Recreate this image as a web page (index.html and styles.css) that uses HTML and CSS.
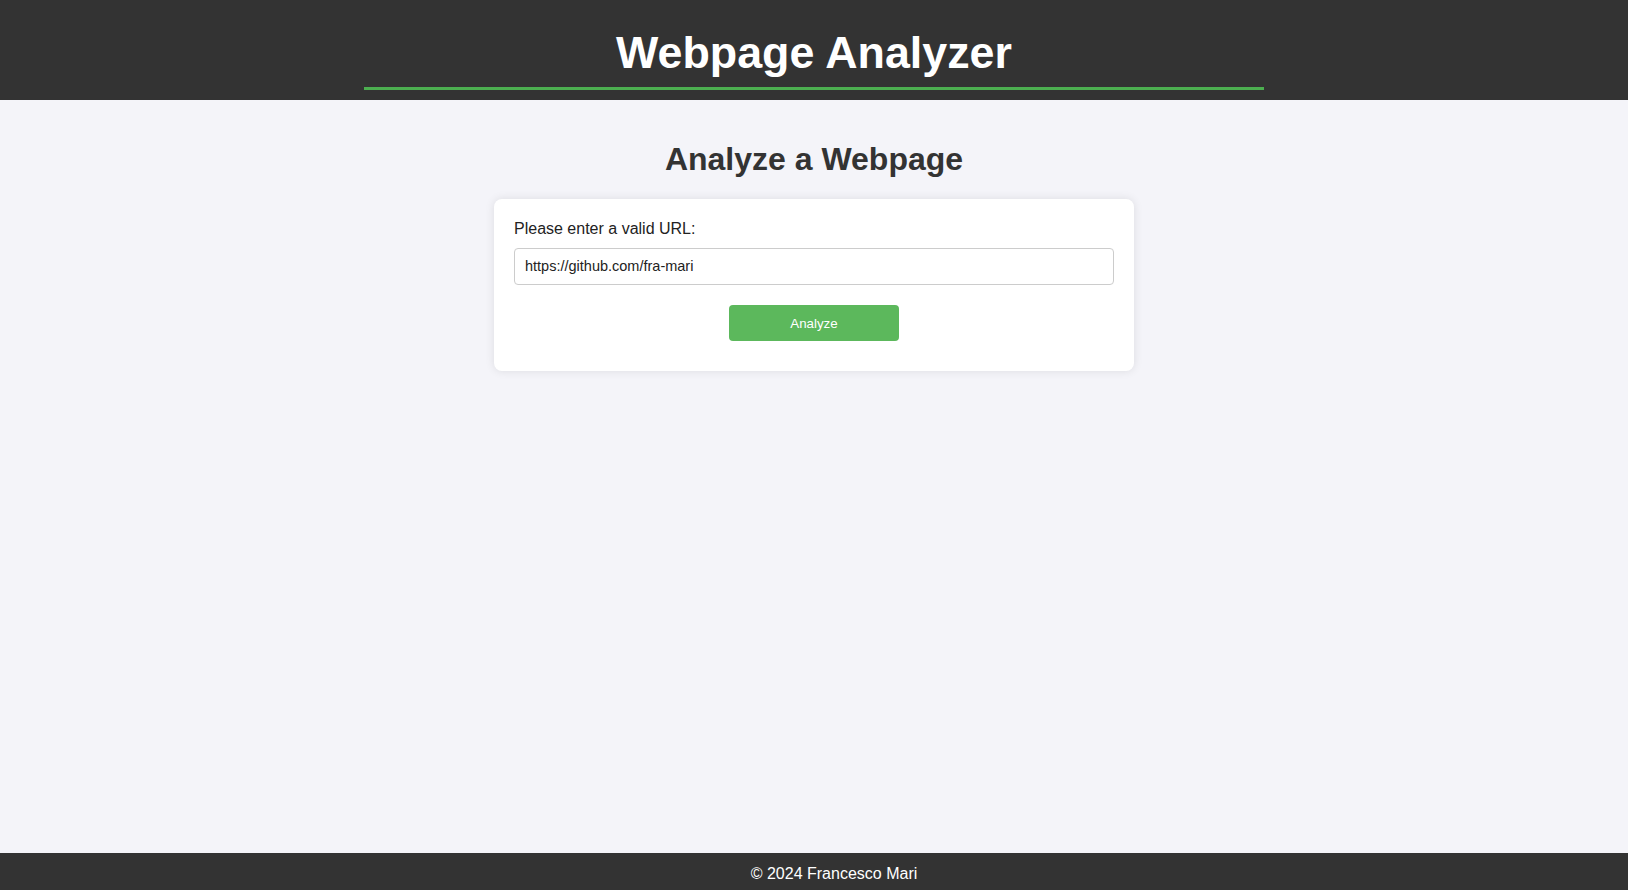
FILE: index.html
```html
<!DOCTYPE html>
<html lang="en">
<head>
<meta charset="utf-8">
<title>Webpage Analyzer</title>
<link rel="stylesheet" href="styles.css">
</head>
<body>
<header class="site-header">
  <h1 class="site-title">Webpage Analyzer</h1>
</header>
<main class="main">
  <h2 class="section-title">Analyze a Webpage</h2>
  <form class="card">
    <label class="field-label" for="url">Please enter a valid URL:</label>
    <input class="field-input" id="url" type="text" value="https://github.com/fra-mari">
    <div class="actions">
      <button class="btn" type="button">Analyze</button>
    </div>
  </form>
</main>
<footer class="site-footer">© 2024 Francesco Mari</footer>
</body>
</html>
```
FILE: styles.css
```css
html, body {
  margin: 0;
  padding: 0;
}
body {
  font-family: "Liberation Sans", Arial, sans-serif;
  background: #f4f4f9;
  color: #333;
  min-height: 100vh;
  display: flex;
  flex-direction: column;
}
.site-header {
  background: #333;
  padding: 27px 0 10px;
}
.site-title {
  margin: 0 auto;
  max-width: 900px;
  color: #fff;
  text-align: center;
  font-size: 44.8px;
  line-height: 50px;
  font-weight: 700;
  padding-bottom: 10px;
  border-bottom: 3px solid #4caf50;
}
.main {
  flex: 1;
  padding: 20px 0;
  display: flex;
  flex-direction: column;
  align-items: center;
}
.section-title {
  margin: 21px 0 21px;
  font-size: 32px;
  line-height: 37px;
  font-weight: 700;
  color: #333;
}
.card {
  width: 600px;
  background: #fff;
  padding: 20px 20px 30px;
  border-radius: 8px;
  box-shadow: 0 0 10px rgba(0, 0, 0, 0.1);
  display: flex;
  flex-direction: column;
}
.field-label {
  font-size: 16px;
  line-height: 19px;
  color: #222;
  margin-bottom: 10px;
}
.field-input {
  font-family: "Liberation Sans", Arial, sans-serif;
  font-size: 14.5px;
  line-height: 17px;
  color: #222;
  padding: 9px 10px;
  border: 1px solid #ccc;
  border-radius: 4px;
  background: #fff;
  margin: 0;
  outline: none;
}
.actions {
  display: flex;
  justify-content: center;
  margin-top: 20px;
}
.btn {
  width: 170px;
  height: 36px;
  background: #5cb85c;
  color: #fff;
  border: none;
  border-radius: 4px;
  font-family: "Liberation Sans", Arial, sans-serif;
  font-size: 13.33px;
  font-weight: 400;
  cursor: pointer;
}
.site-footer {
  background: #333;
  color: #fff;
  text-align: center;
  font-size: 16px;
  line-height: 17px;
  padding: 12px 0 8px 40px;
}
```
